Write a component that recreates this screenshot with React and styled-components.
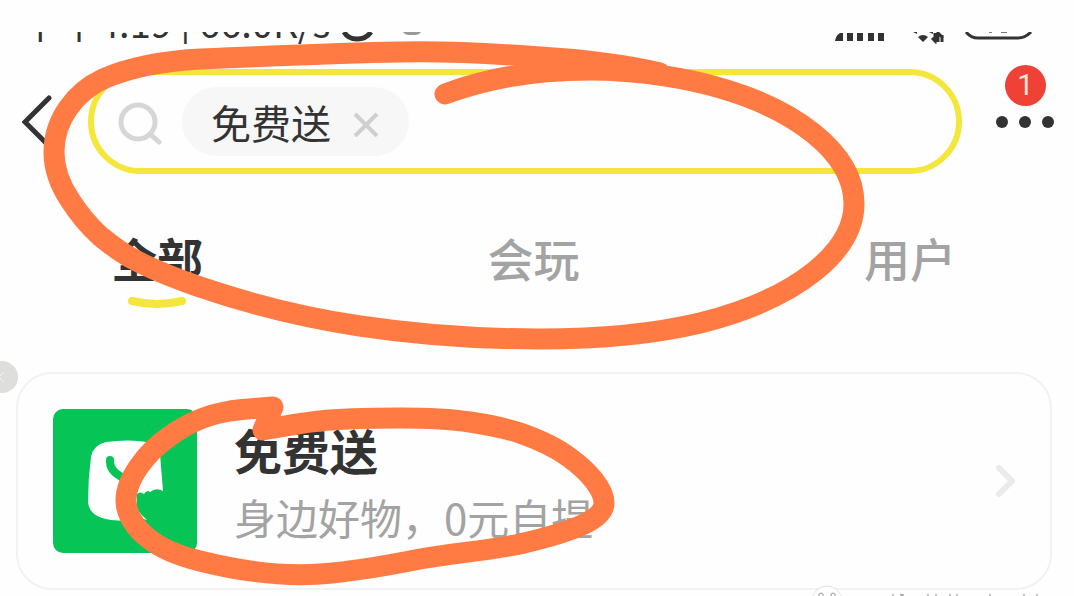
import React, { useState } from 'react';
import styled, { createGlobalStyle } from 'styled-components';

const GlobalStyle = createGlobalStyle`
  * {
    box-sizing: border-box;
  }

  body {
    margin: 0;
    background: #fefefe;
    font-family: 'Noto Sans CJK SC', sans-serif;
    color: #333333;
  }

  button {
    padding: 0;
    border: none;
    background: none;
    font-family: inherit;
    color: inherit;
    cursor: pointer;
  }

  svg {
    display: block;
  }
`;

const Page = styled.div`
  position: relative;
  min-height: 100vh;
  overflow: hidden;
`;

const StatusBar = styled.div`
  margin-top: 32px;
  height: 12px;
  padding: 0 40px 3px 22px;
  display: flex;
  align-items: flex-end;
  gap: 12px;
  overflow: hidden;
`;

const StatusText = styled.span`
  font-size: 38px;
  line-height: 38px;
  white-space: nowrap;
`;

const StatusIcons = styled.div`
  flex: 1;
  height: 9px;
  display: flex;
  justify-content: space-between;
`;

const Header = styled.header`
  padding: 25px 20px 0 22px;
  display: flex;
  align-items: center;
`;

const BackButton = styled.button`
  margin-right: 36px;
`;

const SearchBox = styled.div`
  flex: 1;
  min-width: 0;
  height: 105px;
  padding-left: 24px;
  display: flex;
  align-items: center;
  border: 6px solid #f4e63a;
  border-radius: 53px;
`;

const Chip = styled.div`
  height: 69px;
  margin-left: 20px;
  padding: 0 30px 0 29px;
  display: flex;
  align-items: center;
  gap: 22px;
  border-radius: 35px;
  background: #f7f7f7;
  font-size: 40px;
  line-height: 60px;
  white-space: nowrap;
`;

const SearchInput = styled.input`
  flex: 1;
  min-width: 0;
  margin: 0 30px 0 12px;
  border: none;
  outline: none;
  background: transparent;
  font-family: inherit;
  font-size: 40px;
`;

const MoreButton = styled.button`
  position: relative;
  margin-left: 34px;
`;

const Badge = styled.span`
  position: absolute;
  left: 9px;
  bottom: 22px;
  width: 41px;
  height: 41px;
  border-radius: 50%;
  background: #ef4136;
  color: #ffe9dc;
  font-family: Roboto, sans-serif;
  font-size: 29px;
  line-height: 41px;
  text-align: center;
`;

const Tabs = styled.nav`
  margin-top: 53px;
  padding: 0 118px 0 111px;
  display: flex;
  justify-content: space-between;
  align-items: flex-start;
`;

const Tab = styled.button`
  display: flex;
  flex-direction: column;
  align-items: center;
  gap: 9px;
  font-size: 46px;
  font-weight: ${(props) => (props.$active ? 700 : 500)};
  line-height: 60px;
  color: ${(props) => (props.$active ? '#333333' : '#a3a3a3')};
`;

const Underline = styled.svg`
  visibility: ${(props) => (props.$active ? 'visible' : 'hidden')};
`;

const Card = styled.a`
  margin: 62px 22px 0 16px;
  padding: 35px;
  display: flex;
  align-items: center;
  gap: 37px;
  border: 2px solid #f2f2f2;
  border-radius: 36px;
  color: inherit;
  text-decoration: none;
`;

const CardText = styled.div`
  flex: 1;
  padding-top: 4px;
`;

const CardTitle = styled.h2`
  margin: 0;
  font-size: 48px;
  font-weight: 700;
  line-height: 60px;
`;

const CardDescription = styled.p`
  margin: 8px 0 0;
  font-size: 42px;
  font-weight: 400;
  line-height: 60px;
  color: #a3a3a3;
`;

const SideButton = styled.button`
  position: absolute;
  top: 361px;
  left: -14px;
  width: 32px;
  height: 32px;
  border-radius: 50%;
  background: #dededc;
`;

const Marker = styled.svg`
  position: absolute;
  top: 0;
  left: 0;
  pointer-events: none;
`;

const Watermark = styled.svg`
  position: absolute;
  right: 24px;
  bottom: 0;
`;

const tabs = ['全部', '会玩', '用户'];

function StatusGlyphs() {
  return (
    <StatusIcons>
      <svg width="80" height="10" viewBox="0 0 80 10" fill="none">
        <path d="M2 0 Q6 7 15 7 Q24 7 29 0" stroke="#333" strokeWidth="5" />
        <path d="M61 0 H79 Q77 3 73 3 H67 Q63 3 61 0Z" fill="#999" />
      </svg>
      <svg width="200" height="12" viewBox="0 0 200 12" fill="none">
        <path d="M1 9 Q2 3 6 1 H9 V9Z" fill="#333" />
        <path
          d="M13 1h6v8h-6z M23 1h6v8h-6z M34 1h6v8h-6z M44 1h6v8h-6z"
          fill="#333"
        />
        <path d="M79 0h4v2z M95 0h4v2z M84 5 Q89 1 94 5 L89 10Z" fill="#333" />
        <path d="M98 6l3 3V1 M104 10V1l5 5 M108 10V3" stroke="#333" strokeWidth="3" />
        <path d="M132 0 Q137 6 144 6 H184 Q191 6 197 0" stroke="#333" strokeWidth="3" />
        <path d="M155 0h3 M167 0h6" stroke="#777" strokeWidth="2" />
      </svg>
    </StatusIcons>
  );
}

function GiftLogo() {
  return (
    <svg width="144" height="144" viewBox="0 0 144 144">
      <rect width="144" height="144" rx="10" fill="#06c455" />
      <path
        d="M53 33 Q80 29 104 35 Q107 37 107 45 L110 82 Q103 78 97 83 Q94 80 91 85 Q87 82 84 85 L84 100 Q88 106 94 111 L87 109 L89 113 Q70 112 58 111 Q36 108 35 93 Q35 70 38 48 Q40 36 53 33Z"
        fill="#ffffff"
      />
      <path
        d="M57 51 Q56 63 73 70 Q84 70 92 57"
        fill="none"
        stroke="#06c455"
        strokeWidth="8"
        strokeLinecap="round"
      />
    </svg>
  );
}

function MarkerCircles() {
  return (
    <Marker
      width="1074"
      height="596"
      viewBox="0 0 1074 596"
      fill="none"
      stroke="#ff7b43"
      strokeWidth="21"
      strokeLinecap="round"
      strokeLinejoin="round"
    >
      <path d="M445 94 C490 77 540 70 590 70 C640 70 690 79 720 88 C790 108 854 150 854 204 C854 250 800 298 700 323 C650 335 600 339 540 339 C480 339 420 335 360 326 C300 317 250 304 200 287 C177 279 155 271 133 259 C121 253 111 245 100 236 C89 226 79 214 70 200 C60 185 54 170 54 152 C54 120 75 92 103 79 C130 67 165 61 200 59 C270 56 340 53 400 52 C450 51 500 54 540 57 C590 60 630 66 660 73" />
      <path d="M263 430 C285 426 300 423 320 421 C345 418 375 418 400 418 C425 418 450 419 470 422 C490 425 505 428 520 433 C540 440 557 448 570 458 C588 471 604 489 604 503 C604 518 580 530 520 544 C485 551 455 553 420 559 C385 566 350 572 320 574 C280 577 240 571 200 561 C175 555 160 548 148 538 C135 528 126 514 126 500 C126 480 145 453 170 436 C185 425 205 415 230 411 C245 409 258 408 273 407 L263 430" />
    </Marker>
  );
}

function App() {
  const [active, setActive] = useState('全部');
  const [keyword, setKeyword] = useState('免费送');

  return (
    <Page>
      <GlobalStyle />
      <StatusBar>
        <StatusText>下午4:19 | 66.0K/s</StatusText>
        <StatusGlyphs />
      </StatusBar>

      <Header>
        <BackButton aria-label="返回">
          <svg width="30" height="54" viewBox="0 0 30 54" fill="none">
            <path
              d="M27 3 L3 27 L27 51"
              stroke="#333"
              strokeWidth="5"
              strokeLinecap="round"
            />
          </svg>
        </BackButton>
        <SearchBox>
          <svg width="44" height="46" viewBox="0 0 44 46" fill="none">
            <circle cx="20" cy="23" r="17" stroke="#d6d6d6" strokeWidth="5" />
            <path
              d="M32 35 L41 43"
              stroke="#d6d6d6"
              strokeWidth="5"
              strokeLinecap="round"
            />
          </svg>
          {keyword && (
            <Chip>
              {keyword}
              <button aria-label="清除" onClick={() => setKeyword('')}>
                <svg width="26" height="30" viewBox="0 0 26 30" fill="none">
                  <path d="M2 7 L24 29 M24 7 L2 29" stroke="#cfcfcf" strokeWidth="4" />
                </svg>
              </button>
            </Chip>
          )}
          <SearchInput type="text" aria-label="搜索" />
        </SearchBox>
        <MoreButton aria-label="更多">
          <svg width="58" height="12" viewBox="0 0 58 12" fill="#333">
            <circle cx="6" cy="6" r="6" />
            <circle cx="29" cy="6" r="6" />
            <circle cx="52" cy="6" r="6" />
          </svg>
          <Badge>1</Badge>
        </MoreButton>
      </Header>

      <Tabs>
        {tabs.map((name) => (
          <Tab
            key={name}
            $active={name === active}
            onClick={() => setActive(name)}
          >
            {name}
            <Underline
              $active={name === active}
              width="58"
              height="14"
              viewBox="0 0 58 14"
              fill="none"
            >
              <path
                d="M4 5 Q29 11 54 5"
                stroke="#f4e63a"
                strokeWidth="8"
                strokeLinecap="round"
              />
            </Underline>
          </Tab>
        ))}
      </Tabs>

      <Card href="#free">
        <GiftLogo />
        <CardText>
          <CardTitle>免费送</CardTitle>
          <CardDescription>身边好物，0元自提</CardDescription>
        </CardText>
        <svg width="20" height="32" viewBox="0 0 20 32" fill="none">
          <path
            d="M4 3 L17 16 L4 29"
            stroke="#ebebeb"
            strokeWidth="6"
            strokeLinecap="round"
          />
        </svg>
      </Card>

      <SideButton aria-label="上一张">
        <svg width="32" height="32" viewBox="0 0 32 32" fill="none">
          <path d="M18 11 L13 16 L18 21" stroke="#f4f4f4" strokeWidth="1" />
        </svg>
      </SideButton>

      <MarkerCircles />

      <Watermark width="240" height="11" viewBox="0 0 240 11" fill="none">
        <circle cx="17" cy="16" r="15" fill="#fff" stroke="#e2e2e2" />
        <path
          d="M9 11 V9 Q11 7 13 9 V11 M21 11 V9 Q23 7 25 9 V11"
          stroke="#999"
        />
        <path
          d="M83 9v2 M90 10h4 M92 9v2 M118 9v2 M126 9v2 M140 9v2 M147 9v2 M180 9v2 M214 9v2 M227 9v2"
          stroke="#888"
        />
      </Watermark>
    </Page>
  );
}

export default App;
